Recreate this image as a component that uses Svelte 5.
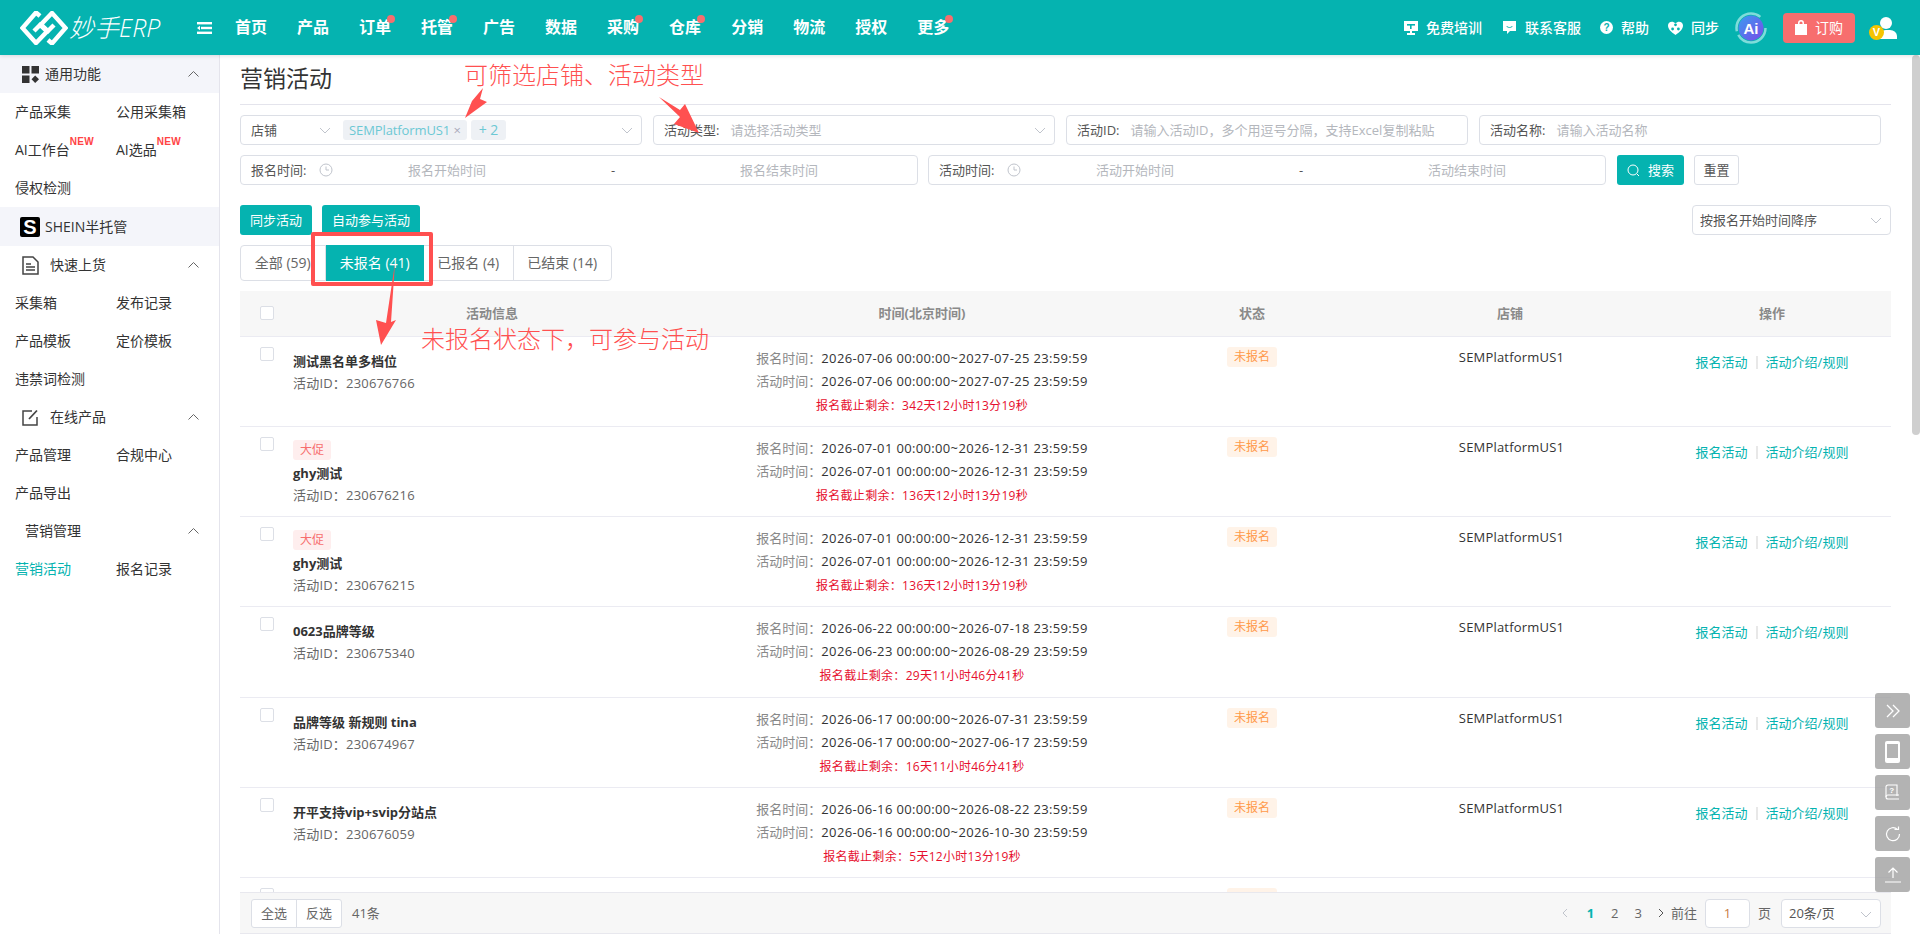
<script>
	const navItems = [
		{ name: '首页' }, { name: '产品' }, { name: '订单', dot: true }, { name: '托管', dot: true },
		{ name: '广告' }, { name: '数据' }, { name: '采购', dot: true }, { name: '仓库', dot: true },
		{ name: '分销' }, { name: '物流' }, { name: '授权' }, { name: '更多', dot: true }
	]

	const rows = [
		{ title: '测试黑名单多档位', id: '230676766', signup: '2026-07-06 00:00:00~2027-07-25 23:59:59', run: '2026-07-06 00:00:00~2027-07-25 23:59:59', left: '342天12小时13分19秒' },
		{ tag: true, title: 'ghy测试', id: '230676216', signup: '2026-07-01 00:00:00~2026-12-31 23:59:59', run: '2026-07-01 00:00:00~2026-12-31 23:59:59', left: '136天12小时13分19秒' },
		{ tag: true, title: 'ghy测试', id: '230676215', signup: '2026-07-01 00:00:00~2026-12-31 23:59:59', run: '2026-07-01 00:00:00~2026-12-31 23:59:59', left: '136天12小时13分19秒' },
		{ title: '0623品牌等级', id: '230675340', signup: '2026-06-22 00:00:00~2026-07-18 23:59:59', run: '2026-06-23 00:00:00~2026-08-29 23:59:59', left: '29天11小时46分41秒' },
		{ title: '品牌等级 新规则 tina', id: '230674967', signup: '2026-06-17 00:00:00~2026-07-31 23:59:59', run: '2026-06-17 00:00:00~2027-06-17 23:59:59', left: '16天11小时46分41秒' },
		{ title: '开平支持vip+svip分站点', id: '230676059', signup: '2026-06-16 00:00:00~2026-08-22 23:59:59', run: '2026-06-16 00:00:00~2026-10-30 23:59:59', left: '5天12小时13分19秒' }
	]
</script>

<div class="page">
	<header class="topbar">
		<div class="logo">
			<svg width="48" height="34" viewBox="0 0 48 34" fill="none" stroke="#fff" stroke-width="4.4">
				<path d="M20 5 L16 1.5 L2.5 17 L16 32 L27 20.5 L20 14 L14 20" />
				<path d="M28 29 L32 32.5 L45.5 17 L32 2 L21 13.5 L28 20 L34 14" />
			</svg>
			<span class="logo-text">妙手ERP</span>
		</div>
		<svg class="burger" width="15" height="12" viewBox="0 0 15 12" fill="#fff">
			<rect x="0" y="0" width="15" height="2.4" />
			<rect x="4" y="4.8" width="11" height="2.4" />
			<path d="M0 6 L3 3.8 V8.2 Z" />
			<rect x="0" y="9.6" width="15" height="2.4" />
		</svg>
		<nav class="nav">
			{#each navItems as item}
				<span class="nav-item">{item.name}{#if item.dot}<i class="dot"></i>{/if}</span>
			{/each}
		</nav>
		<div class="top-right">
			<span class="top-link">
				<svg width="14" height="16" viewBox="0 0 14 16" fill="#fff"><path d="M0 1h14v10H8v2h3v2H3v-2h3v-2H0z" /><rect x="3" y="4" width="8" height="1.6" fill="#05b3b0" /><rect x="6" y="4" width="1.6" height="5" fill="#05b3b0" /></svg>
				免费培训
			</span>
			<span class="top-link">
				<svg width="15" height="15" viewBox="0 0 15 15" fill="#fff"><path d="M1 1h13v10H8l-3 3v-3H1z" /><path d="M4.5 6c1.5 2 4.5 2 6 0" stroke="#05b3b0" fill="none" /></svg>
				联系客服
			</span>
			<span class="top-link">
				<svg width="13" height="13" viewBox="0 0 13 13"><circle cx="6.5" cy="6.5" r="6.5" fill="#fff" /><text x="6.5" y="10" font-size="10" font-weight="700" text-anchor="middle" fill="#05b3b0" font-family="Liberation Sans">?</text></svg>
				帮助
			</span>
			<span class="top-link">
				<svg width="15" height="14" viewBox="0 0 15 14" fill="#fff"><path d="M7.5 14 C3 11 0 8 0 4.5 C0 1 4.5-1 7.5 2.5 C10.5-1 15 1 15 4.5 C15 8 12 11 7.5 14Z" /><circle cx="7.5" cy="3.8" r="1.4" fill="#05b3b0" /><circle cx="4.6" cy="8" r="1.4" fill="#05b3b0" /><circle cx="10.4" cy="8" r="1.4" fill="#05b3b0" /></svg>
				同步
			</span>
			<svg class="ai" width="32" height="32" viewBox="0 0 32 32">
				<defs><linearGradient id="aig" x1="0" y1="0" x2="1" y2="1"><stop offset="0" stop-color="#3a9bf0" /><stop offset="1" stop-color="#7a4be8" /></linearGradient></defs>
				<circle cx="16" cy="16" r="14.5" fill="none" stroke="#7fdcda" stroke-width="2.5" stroke-dasharray="38 4 36 13" />
				<circle cx="16" cy="16" r="12.5" fill="url(#aig)" />
				<text x="16" y="21.5" font-size="15" font-weight="700" text-anchor="middle" fill="#fff" font-family="Liberation Sans">Ai</text>
			</svg>
			<span class="order">
				<svg width="12" height="15" viewBox="0 0 12 15" fill="#fff"><path d="M0 4h3V3a3 3 0 0 1 6 0v1h3v11H0z" /><path d="M4.5 4V3a1.5 1.5 0 0 1 3 0v1z" fill="#f76e6e" /></svg>
				订购
			</span>
			<span class="avatar">
				<svg width="27" height="24" viewBox="0 0 27 24" fill="#fff"><circle cx="16" cy="7" r="6" /><path d="M9 21 a7 6 0 0 1 7-7 h4 a7 6 0 0 1 7 6 v3 H9z" /></svg>
				<b class="vip">V</b>
			</span>
		</div>
	</header>

	<div class="body">
		<aside class="side">
			<div class="sec grey first">
				<svg class="sec-icon" width="17" height="17" viewBox="0 0 17 17" fill="#333"><rect width="7.5" height="7.5" /><rect x="9.5" width="7.5" height="7.5" /><rect y="9.5" width="7.5" height="7.5" /><path d="M13.2 9.5 L17 13.2 L13.2 17 L9.5 13.2Z" /></svg>
				<span>通用功能</span>
				<svg class="chev" width="11" height="6" viewBox="0 0 11 6"><path d="M.5 5.5 L5.5.5 L10.5 5.5" fill="none" stroke="#666" /></svg>
			</div>
			<div class="links">
				<span>产品采集</span><span>公用采集箱</span>
				<span class="new">AI工作台<sup>NEW</sup></span><span class="new">AI选品<sup>NEW</sup></span>
				<span>侵权检测</span>
			</div>
			<div class="sec grey shein">
				<b class="s-logo">S</b>
				<span>SHEIN半托管</span>
			</div>
			<div class="sec wide">
				<svg class="sec-icon" width="17" height="19" viewBox="0 0 17 19" fill="none" stroke="#444" stroke-width="1.5"><path d="M1 1h10l5 5v12H1z" /><path d="M4 8h5M4 11h9M4 14h9" /></svg>
				<span>快速上货</span>
				<svg class="chev" width="11" height="6" viewBox="0 0 11 6"><path d="M.5 5.5 L5.5.5 L10.5 5.5" fill="none" stroke="#666" /></svg>
			</div>
			<div class="links">
				<span>采集箱</span><span>发布记录</span>
				<span>产品模板</span><span>定价模板</span>
				<span>违禁词检测</span>
			</div>
			<div class="sec wide">
				<svg class="sec-icon" width="17" height="17" viewBox="0 0 17 17" fill="none" stroke="#444" stroke-width="1.5"><path d="M10 2H1v14h14V8" /><path d="M7 10 L15 1.5" stroke-width="1.8" /></svg>
				<span>在线产品</span>
				<svg class="chev" width="11" height="6" viewBox="0 0 11 6"><path d="M.5 5.5 L5.5.5 L10.5 5.5" fill="none" stroke="#666" /></svg>
			</div>
			<div class="links">
				<span>产品管理</span><span>合规中心</span>
				<span>产品导出</span>
			</div>
			<div class="sec plain">
				<span>营销管理</span>
				<svg class="chev" width="11" height="6" viewBox="0 0 11 6"><path d="M.5 5.5 L5.5.5 L10.5 5.5" fill="none" stroke="#666" /></svg>
			</div>
			<div class="links">
				<span class="on">营销活动</span><span>报名记录</span>
			</div>
		</aside>

		<main class="main">
			<h1>营销活动</h1>
			<div class="filters">
				<div class="box shop">
					<span class="lab shop-lab">店铺</span>
					<svg class="cv" width="12" height="7" viewBox="0 0 12 7"><path d="M1 1 L6 6 L11 1" fill="none" stroke="#c0c4cc" /></svg>
					<span class="pill first-pill">SEMPlatformUS1 <i>×</i></span>
					<span class="pill more">+ 2</span>
					<svg class="cv end" width="12" height="7" viewBox="0 0 12 7"><path d="M1 1 L6 6 L11 1" fill="none" stroke="#c0c4cc" /></svg>
				</div>
				<div class="box">
					<span class="lab">活动类型:</span><span class="ph">请选择活动类型</span>
					<svg class="cv end" width="12" height="7" viewBox="0 0 12 7"><path d="M1 1 L6 6 L11 1" fill="none" stroke="#c0c4cc" /></svg>
				</div>
				<div class="box">
					<span class="lab">活动ID:</span><span class="ph">请输入活动ID，多个用逗号分隔，支持Excel复制粘贴</span>
				</div>
				<div class="box">
					<span class="lab">活动名称:</span><span class="ph">请输入活动名称</span>
				</div>
			</div>
			<div class="dates">
				<div class="box range">
					<span class="lab time-lab">报名时间:</span>
					<svg width="14" height="14" viewBox="0 0 14 14" fill="none" stroke="#c0c4cc"><circle cx="7" cy="7" r="6" /><path d="M7 3.5V7h3" /></svg>
					<span class="ends"><span class="ph">报名开始时间</span><span class="dash">-</span><span class="ph">报名结束时间</span></span>
				</div>
				<div class="box range">
					<span class="lab time-lab">活动时间:</span>
					<svg width="14" height="14" viewBox="0 0 14 14" fill="none" stroke="#c0c4cc"><circle cx="7" cy="7" r="6" /><path d="M7 3.5V7h3" /></svg>
					<span class="ends"><span class="ph">活动开始时间</span><span class="dash">-</span><span class="ph">活动结束时间</span></span>
				</div>
				<span class="btn primary search">
					<svg width="13" height="13" viewBox="0 0 13 13" fill="none" stroke="#fff"><circle cx="6" cy="6" r="5" /><path d="M10 10l2 2" /></svg>
					搜索
				</span>
				<span class="btn reset">重置</span>
			</div>
			<div class="actions">
				<span class="btn primary">同步活动</span>
				<span class="btn primary">自动参与活动</span>
				<div class="box sort">
					<span>按报名开始时间降序</span>
					<svg class="cv end" width="12" height="7" viewBox="0 0 12 7"><path d="M1 1 L6 6 L11 1" fill="none" stroke="#c0c4cc" /></svg>
				</div>
			</div>
			<div class="tabs">
				<span class="tab t1">全部 (59)</span>
				<span class="tab t2 active">未报名 (41)</span>
				<span class="tab t3">已报名 (4)</span>
				<span class="tab t4">已结束 (14)</span>
			</div>

			<div class="thead">
				<span class="cell-check"><i class="check"></i></span>
				<span>活动信息</span>
				<span>时间(北京时间)</span>
				<span>状态</span>
				<span>店铺</span>
				<span>操作</span>
			</div>
			<div class="tbody">
				{#each rows as row}
					<div class="row">
						<div class="cell-check"><i class="check"></i></div>
						<div class="info">
							{#if row.tag}<span class="promo">大促</span>{/if}
							<div class="title">{row.title}</div>
							<div class="aid">活动ID：{row.id}</div>
						</div>
						<div class="time">
							<div><em>报名时间：</em><span class="val">{row.signup}</span></div>
							<div><em>活动时间：</em><span class="val">{row.run}</span></div>
							<div class="remain">报名截止剩余：{row.left}</div>
						</div>
						<div class="status"><span>未报名</span></div>
						<div class="store">SEMPlatformUS1</div>
						<div class="ops"><span>报名活动</span><i></i><span>活动介绍/规则</span></div>
					</div>
				{/each}
				<!-- next row, only its top edge shows above the footer -->
				<div class="row">
					<div class="cell-check"><i class="check"></i></div>
					<div></div>
					<div></div>
					<div class="status"><span></span></div>
				</div>
			</div>
			<div class="foot">
				<div class="pick"><span>全选</span><span>反选</span></div>
				<span class="count">41条</span>
				<div class="pager">
					<svg class="prev" width="7" height="10" viewBox="0 0 7 10"><path d="M6 1 L2 5 L6 9" fill="none" stroke="#c0c4cc" /></svg>
					<b>1</b><span>2</span><span>3</span>
					<svg width="7" height="10" viewBox="0 0 7 10"><path d="M1 1 L5 5 L1 9" fill="none" stroke="#555" /></svg>
					<span class="go">前往</span>
					<span class="page-input">1</span>
					<span>页</span>
					<div class="box size"><span>20条/页</span><svg class="cv end" width="12" height="7" viewBox="0 0 12 7"><path d="M1 1 L6 6 L11 1" fill="none" stroke="#c0c4cc" /></svg></div>
				</div>
			</div>
		</main>
		<div class="scrollbar"><i></i></div>
	</div>

	<!-- annotations drawn on top of the screenshot -->
	<div class="note n1">可筛选店铺、活动类型</div>
	<div class="note n2">未报名状态下，可参与活动</div>
	<div class="note-box"></div>
	<svg class="arrows" width="1920" height="934" viewBox="0 0 1920 934" fill="#ff5050">
		<path d="M465 118 L472 101 L483 88 L480 99 L487 102 Z" />
		<path d="M659 97 L680 110 L685 104 L699 133 L674 124 L680 117 Z" />
		<path d="M395 263 L391 322 L396 320 L381 345 L376 320 L386 323 Z" />
	</svg>

	<div class="floats">
		<span><svg width="16" height="16" viewBox="0 0 16 16" fill="none" stroke="#fff" stroke-width="1.3"><path d="M2 2l6 6-6 6M8 2l6 6-6 6" /></svg></span>
		<span><svg width="15" height="22" viewBox="0 0 15 22"><rect width="15" height="22" rx="2" fill="#fff" /><rect x="2" y="3" width="11" height="14" fill="#b3b3b3" /></svg></span>
		<span><svg width="15" height="17" viewBox="0 0 15 17" fill="none" stroke="#fff" stroke-width="1.1"><path d="M12 12V1H3a2 2 0 0 0-2 2v10" /><path d="M1 13a2 2 0 0 1 2-2h11M1 13a2 2 0 0 0 2 2h11" /><text x="6.8" y="8.5" font-size="8" font-weight="700" text-anchor="middle" fill="#fff" stroke="none" font-family="Liberation Sans">?</text></svg></span>
		<span><svg width="16" height="16" viewBox="0 0 16 16" fill="none" stroke="#fff" stroke-width="1.2"><path d="M12.5 3.5A6.5 6.5 0 1 0 14.5 8" /><path d="M9.5 3.5h4v-3" /></svg></span>
		<span><svg width="16" height="16" viewBox="0 0 16 16" fill="none" stroke="#fff" stroke-width="1.2"><path d="M0 15h16M8 11V1M3.5 5.5L8 1l4.5 4.5" /></svg></span>
	</div>
</div>

<style>
	:global(body) {
		margin: 0;
		overflow: hidden;
	}
	.page {
		position: relative;
		width: 1920px;
		height: 934px;
		overflow: hidden;
		background: #fff;
		color: #333;
		font: 13px/1.4 "Open Sans", "Noto Sans CJK SC", sans-serif;
	}

	/* top bar */
	.topbar {
		height: 55px;
		display: flex;
		align-items: center;
		background: #05b3b0;
		color: #fff;
		box-shadow: 0 1px 4px rgba(0, 0, 0, 0.12);
		position: relative;
		z-index: 2;
	}
	.logo {
		display: flex;
		align-items: center;
		width: 197px;
		padding-left: 20px;
		box-sizing: border-box;
	}
	.logo-text {
		margin-left: 1px;
		font-size: 25px;
		font-style: italic;
		font-weight: 300;
		white-space: nowrap;
	}
	.burger {
		margin-right: 23px;
		flex: none;
	}
	.nav {
		display: flex;
		gap: 30px;
	}
	.nav-item {
		position: relative;
		font-size: 16px;
		font-weight: 700;
	}
	.dot {
		position: absolute;
		right: -4px;
		top: -1px;
		width: 8px;
		height: 8px;
		border-radius: 50%;
		background: #f76e6e;
	}
	.top-right {
		margin-left: auto;
		display: flex;
		align-items: center;
		height: 100%;
		padding-right: 23px;
	}
	.top-link {
		display: flex;
		align-items: center;
		gap: 8px;
		font-size: 14px;
		font-weight: 500;
		margin-right: 19px;
		white-space: nowrap;
	}
	.top-link:first-child {
		margin-right: 20px;
	}
	.ai {
		margin-left: -3px;
		margin-right: 16px;
	}
	.order {
		width: 72px;
		height: 30px;
		display: flex;
		align-items: center;
		justify-content: center;
		gap: 8px;
		font-size: 14px;
		border-radius: 4px;
		background: #f76e6e;
	}
	.avatar {
		position: relative;
		margin-left: 15px;
		display: flex;
	}
	.vip {
		position: absolute;
		left: -1px;
		top: 9px;
		width: 15px;
		height: 15px;
		border-radius: 50%;
		background: #f5c400;
		font: 700 11px/15px "Liberation Sans", sans-serif;
		text-align: center;
	}

	/* sidebar */
	.body {
		display: flex;
		height: 879px;
	}
	.side {
		width: 220px;
		flex: none;
		box-sizing: border-box;
		border-right: 1px solid #e4e4ec;
		font-size: 14px;
	}
	.sec {
		position: relative;
		height: 38px;
		display: flex;
		align-items: center;
		padding-left: 22px;
		color: #333;
	}
	.sec.grey {
		background: #f4f5fa;
	}
	.sec-icon {
		margin-right: 6px;
		flex: none;
	}
	.sec.wide .sec-icon {
		margin-right: 11px;
	}
	.sec.plain {
		padding-left: 25px;
	}
	.shein {
		padding-left: 20px;
		height: 39px;
	}
	.s-logo {
		width: 20px;
		height: 20px;
		margin-right: 5px;
		border-radius: 2px;
		background: #000;
		color: #fff;
		font: 700 20px/20px "Liberation Sans", sans-serif;
		text-align: center;
	}
	.chev {
		position: absolute;
		left: 188px;
		top: 16px;
	}
	.links {
		display: grid;
		grid-template-columns: 101px 1fr;
		grid-auto-rows: 38px;
		align-items: center;
		padding-left: 15px;
	}
	.links .on {
		color: #05b3b0;
	}
	.new {
		position: relative;
	}
	.new sup {
		position: absolute;
		top: -4px;
		font: 700 10px/12px "Liberation Sans", sans-serif;
		color: #f44;
		letter-spacing: 0.3px;
	}

	/* main */
	.main {
		flex: none;
		width: 1651px;
		margin-left: 20px;
		display: flex;
		flex-direction: column;
		height: 879px;
	}
	h1 {
		margin: 0;
		height: 49px;
		border-bottom: 1px solid #e4e4ec;
		font-size: 23px;
		font-weight: 400;
		line-height: 47px;
		color: #333;
	}
	.filters {
		margin-top: 10px;
		width: 1641px;
		display: grid;
		grid-template-columns: repeat(4, 402px);
		gap: 11px;
	}
	.box {
		position: relative;
		height: 30px;
		box-sizing: border-box;
		display: flex;
		align-items: center;
		padding-left: 10px;
		border: 1px solid #dcdfe6;
		border-radius: 4px;
		color: #555;
		white-space: nowrap;
	}
	.lab {
		margin-right: 11px;
		color: #555;
	}
	.ph {
		color: #b4b7bd;
	}
	.shop-lab {
		width: 68px;
		margin-right: 0;
	}
	.cv {
		flex: none;
	}
	.cv.end {
		position: absolute;
		right: 8px;
		top: 11px;
	}
	.pill {
		height: 20px;
		padding: 0 6px;
		line-height: 20px;
		border-radius: 3px;
		background: #eef1f5;
		color: #6cc8d4;
		font-size: 13px;
		letter-spacing: -0.1px;
	}
	.first-pill {
		margin-left: 12px;
	}
	.pill i {
		font-style: normal;
		color: #aab;
	}
	.pill.more {
		margin-left: 4px;
		padding: 0 8px;
		font-size: 14px;
	}
	.dates {
		margin-top: 10px;
		display: flex;
		gap: 10px;
	}
	.range {
		width: 678px;
	}
	.time-lab {
		width: 62px;
		margin-right: 6px;
	}
	.ends {
		margin-left: 7px;
		display: grid;
		grid-template-columns: 214px 118px 214px;
		text-align: center;
	}
	.dash {
		color: #555;
	}
	.btn {
		height: 30px;
		box-sizing: border-box;
		display: inline-flex;
		align-items: center;
		justify-content: center;
		border-radius: 3px;
		white-space: nowrap;
	}
	.primary {
		background: #05b3b0;
		color: #fff;
		padding: 0 10px;
	}
	.search {
		width: 67px;
		margin-left: 1px;
		gap: 8px;
		padding: 0;
	}
	.reset {
		width: 45px;
		border: 1px solid #dcdfe6;
		color: #555;
	}
	.actions {
		margin-top: 20px;
		display: flex;
		gap: 10px;
	}
	.sort {
		margin-left: auto;
		width: 199px;
		padding-left: 7px;
	}
	.tabs {
		margin-top: 10px;
		width: 372px;
		height: 36px;
		box-sizing: border-box;
		display: flex;
		border: 1px solid #dcdfe6;
		border-radius: 4px;
		font-size: 14px;
		color: #666;
	}
	.tab {
		display: flex;
		align-items: center;
		justify-content: center;
		border-right: 1px solid #dcdfe6;
	}
	.t1 { width: 84px; }
	.t2 { width: 99px; margin: -1px 0; border-right: 0; }
	.t3 { width: 89px; }
	.t4 { width: 98px; border-right: 0; }
	.active {
		background: #05b3b0;
		color: #fff;
	}
	.thead,
	.row {
		display: grid;
		grid-template-columns: 37px 430px 430px 230px 286px 238px;
	}
	.thead {
		margin-top: 10px;
		height: 44.5px;
		flex: none;
		align-items: center;
		text-align: center;
		background: #f7f7f7;
		border-bottom: 1px solid #ebebf2;
		color: #8a8a8a;
		font-weight: 700;
	}
	.check {
		display: block;
		width: 12px;
		height: 12px;
		border: 1px solid #dcdfe6;
		border-radius: 2px;
		background: #fff;
	}
	.cell-check {
		padding-left: 20px;
	}
	.tbody {
		flex: 1;
		min-height: 0;
		overflow: hidden;
	}
	.row {
		height: 90.25px;
		box-sizing: border-box;
		border-bottom: 1px solid #ebebf2;
	}
	.row .cell-check {
		padding-top: 10px;
	}
	.info {
		padding: 13px 0 0 16px;
	}
	.promo {
		display: block;
		width: 38px;
		height: 20px;
		margin-bottom: 2px;
		border-radius: 3px;
		background: #feeeee;
		color: #f76e6e;
		font-size: 12px;
		line-height: 20px;
		text-align: center;
	}
	.title {
		line-height: 22px;
		font-weight: 700;
		color: #333;
	}
	.aid {
		line-height: 22px;
		color: #666;
		letter-spacing: 0.2px;
	}
	.time {
		padding-top: 10px;
		text-align: center;
		color: #333;
		line-height: 23px;
	}
	.time em {
		font-style: normal;
		color: #888;
	}
	.val {
		letter-spacing: 0.35px;
	}
	.remain {
		font-size: 12px;
		line-height: 25px;
		color: #e60f2e;
		letter-spacing: 0.3px;
	}
	.status {
		padding-top: 10px;
		text-align: center;
	}
	.status span {
		display: inline-block;
		width: 50px;
		height: 20px;
		border-radius: 3px;
		background: #fff3e8;
		color: #ff9a4a;
		font-size: 12px;
		line-height: 20px;
	}
	.store {
		padding: 11px 0 0 3px;
		text-align: center;
		color: #333;
		letter-spacing: 0.2px;
	}
	.ops {
		padding-top: 16px;
		display: flex;
		justify-content: center;
		align-items: flex-start;
		color: #05b3b0;
	}
	.ops i {
		width: 2px;
		height: 13px;
		margin: 3px 8px 0;
		background: #e8e8e8;
	}
	.foot {
		flex: none;
		height: 42px;
		box-sizing: border-box;
		display: flex;
		align-items: center;
		padding: 0 10px 0 11px;
		background: #f7f7f7;
		border: solid #e8e8ee;
		border-width: 1px 0;
		color: #666;
	}
	.pick {
		display: flex;
		height: 29px;
		box-sizing: border-box;
		border: 1px solid #dcdfe6;
		border-radius: 3px;
		background: #fff;
		line-height: 27px;
	}
	.pick span {
		width: 44px;
		text-align: center;
	}
	.pick span + span {
		border-left: 1px solid #dcdfe6;
	}
	.count {
		margin-left: 10px;
	}
	.pager {
		margin-left: auto;
		display: flex;
		align-items: center;
		gap: 16px;
	}
	.pager b {
		color: #05b3b0;
		margin-right: 1px;
	}
	.prev {
		margin-right: 3px;
	}
	.go {
		margin-left: -10px;
		margin-right: -8px;
	}
	.page-input {
		width: 45px;
		height: 29px;
		box-sizing: border-box;
		border: 1px solid #dcdfe6;
		border-radius: 4px;
		background: #fff;
		line-height: 27px;
		text-align: center;
		color: #c77b3f;
		margin-right: -8px;
	}
	.size {
		width: 100px;
		height: 29px;
		background: #fff;
		margin-left: -6px;
		padding-left: 7px;
	}
	.scrollbar {
		margin-left: auto;
		width: 8px;
	}
	.scrollbar i {
		display: block;
		height: 380px;
		border-radius: 4px;
		background: #cfcfcf;
	}

	/* annotations */
	.note {
		position: absolute;
		color: #ff5050;
		font-size: 24px;
		line-height: 30px;
		font-weight: 300;
		white-space: nowrap;
	}
	.n1 {
		left: 464px;
		top: 60px;
	}
	.n2 {
		left: 421px;
		top: 324px;
	}
	.note-box {
		position: absolute;
		left: 311px;
		top: 232px;
		width: 122px;
		height: 54px;
		box-sizing: border-box;
		border: 4px solid #ff5050;
		border-radius: 2px;
	}
	.arrows {
		position: absolute;
		left: 0;
		top: 0;
		pointer-events: none;
	}
	.floats {
		position: absolute;
		left: 1875px;
		top: 693px;
		display: flex;
		flex-direction: column;
		gap: 6px;
	}
	.floats span {
		width: 35px;
		height: 35px;
		display: flex;
		align-items: center;
		justify-content: center;
		border-radius: 3px;
		background: rgba(160, 160, 160, 0.8);
	}
</style>
